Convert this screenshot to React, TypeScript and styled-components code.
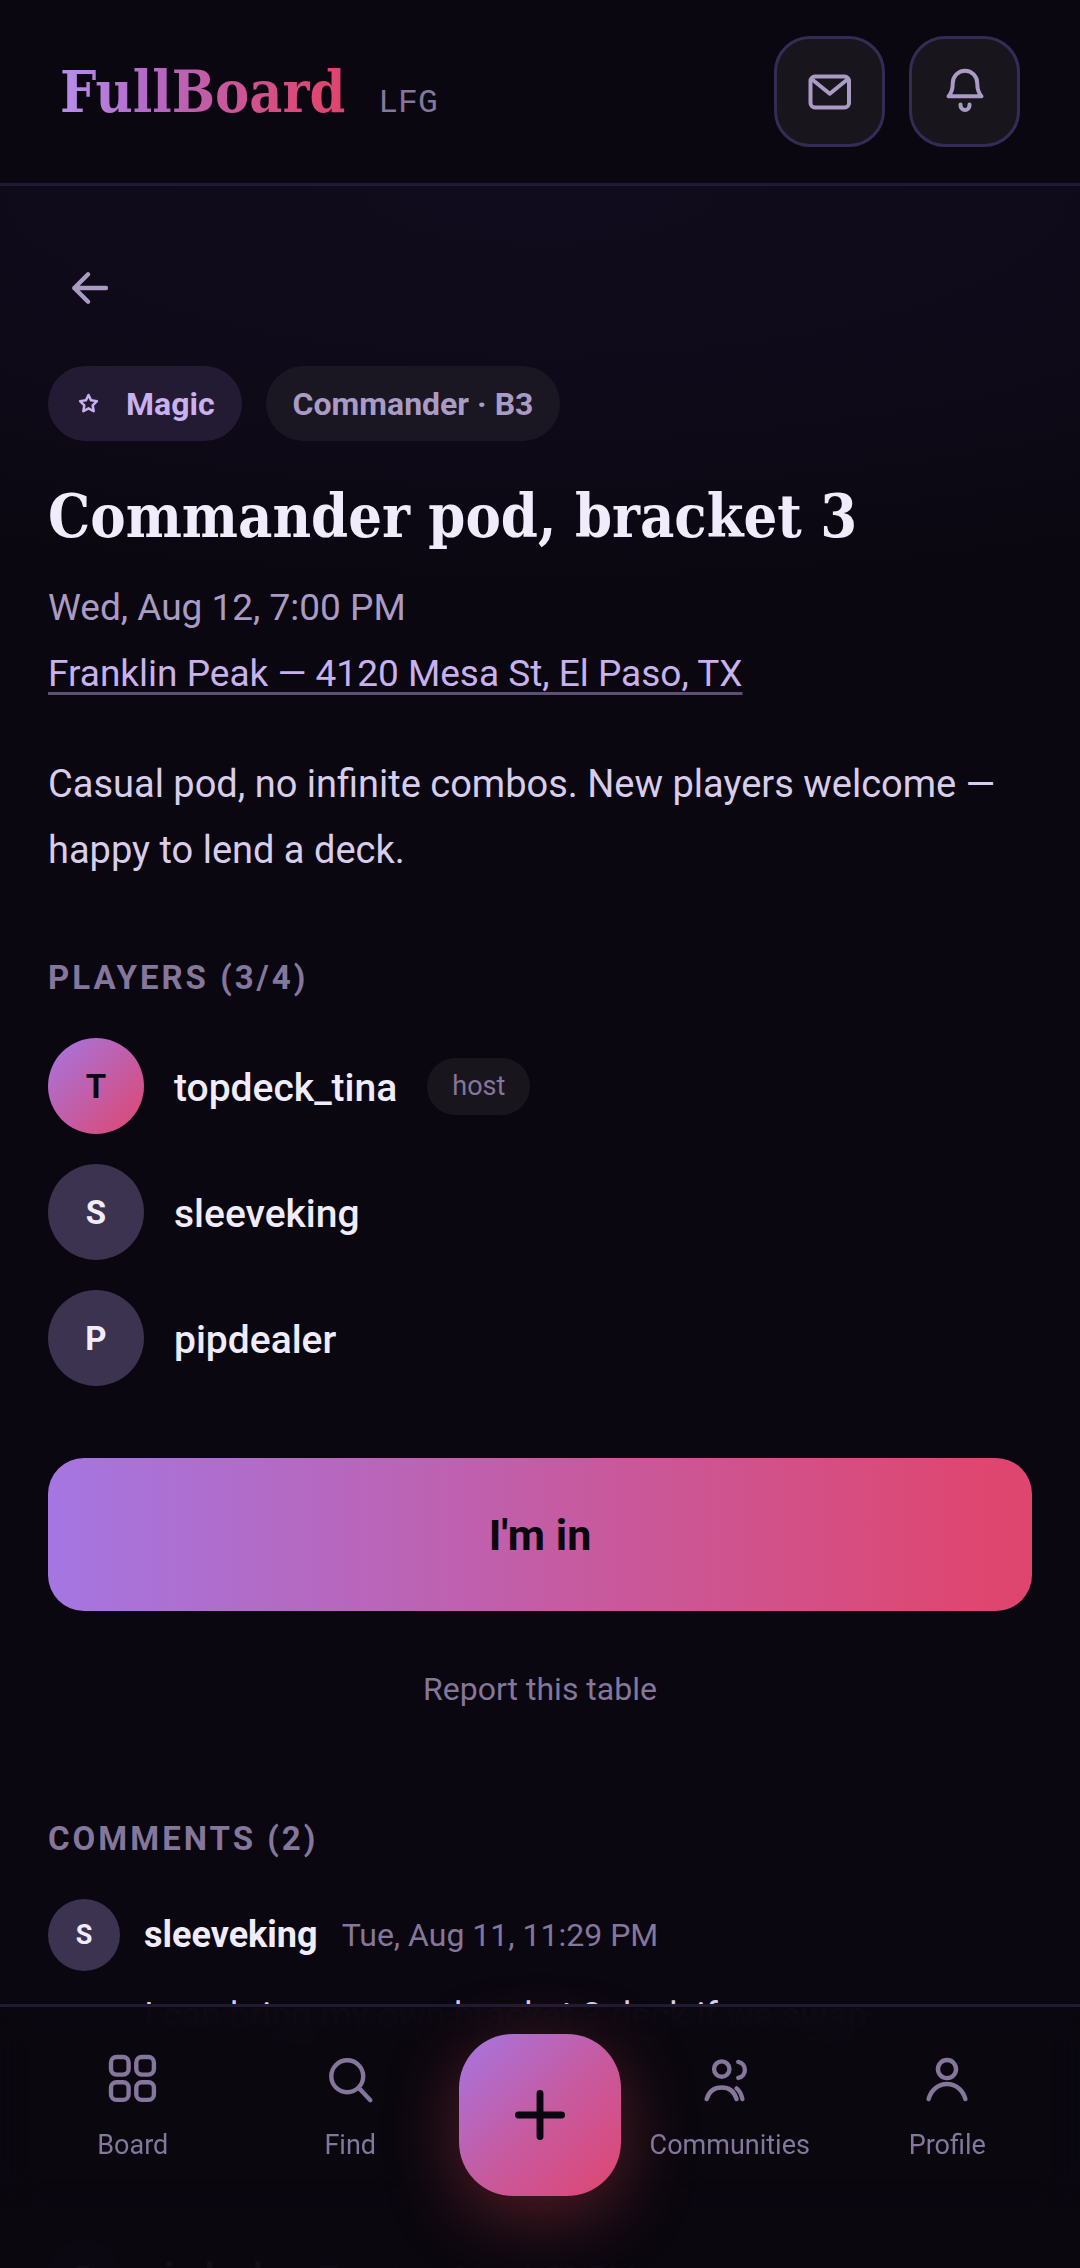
import React from 'react';
import styled, { createGlobalStyle, css } from 'styled-components';

const color = {
  bg: '#0a0710',
  line: '#211a30',
  panel: '#18151d',
  outline: '#352c55',
  text: '#f1ecfb',
  body: '#d8cdea',
  mid: '#a99bc4',
  muted: '#85769b',
  lilac: '#c9b1ee',
  violet: '#a576e2',
  rose: '#df466f',
};

const GlobalStyle = createGlobalStyle`
  *, *::before, *::after { box-sizing: border-box; }
  body {
    margin: 0;
    background: ${color.bg};
    color: ${color.text};
    font-family: Roboto, "Liberation Sans", sans-serif;
  }
  h1, h2, p, ul { margin: 0; padding: 0; }
  ul { list-style: none; }
  button { font-family: inherit; border: 0; padding: 0; cursor: pointer; }
`;

const Shell = styled.div`
  display: flex;
  flex-direction: column;
  height: 100vh;
  overflow: hidden;
`;

const Header = styled.header`
  display: flex;
  align-items: center;
  justify-content: space-between;
  padding: 36px 60px;
  border-bottom: 3px solid ${color.line};
`;

const Brand = styled.div`
  display: flex;
  align-items: baseline;
  gap: 33px;
`;

const Logo = styled.a`
  font-family: "DejaVu Serif Condensed", "DejaVu Serif", serif;
  font-size: 57px;
  font-weight: 700;
  line-height: 72px;
  text-decoration: none;
  color: transparent;
  background: linear-gradient(90deg, #b78fec, #b368c4 32%, #cc5596 62%, ${color.rose} 92%);
  background-clip: text;
  -webkit-background-clip: text;
`;

const LogoTag = styled.span`
  font-family: "Liberation Mono", monospace;
  font-size: 33px;
  color: ${color.muted};
`;

const HeaderActions = styled.div`
  display: flex;
  gap: 24px;
`;

const IconButton = styled.button`
  display: grid;
  place-items: center;
  width: 111px;
  height: 111px;
  border: 3px solid ${color.outline};
  border-radius: 36px;
  background: ${color.panel};
  color: ${color.mid};
`;

const Main = styled.main`
  flex: 1;
  min-height: 0;
  overflow-y: auto;
  scrollbar-width: none;
  padding: 60px 48px 0;
  background: radial-gradient(ellipse 1300px 420px at 50% 0, #110c1d, #0e0a18 55%, ${color.bg});
  background-repeat: no-repeat;
`;

const BackButton = styled.button`
  display: grid;
  place-items: center;
  width: 84px;
  height: 84px;
  background: none;
  color: ${color.mid};
`;

const Chips = styled.div`
  display: flex;
  gap: 24px;
  margin-top: 36px;
`;

const Chip = styled.span<{ $accent?: boolean }>`
  display: flex;
  align-items: center;
  gap: 24px;
  height: 75px;
  padding: 0 27px;
  border-radius: 38px;
  font-size: 32px;
  font-weight: 700;
  background: ${(p) => (p.$accent ? '#231b33' : '#1a1622')};
  color: ${(p) => (p.$accent ? color.lilac : color.mid)};
`;

const Title = styled.h1`
  margin-top: 40px;
  font-family: "DejaVu Serif Condensed", "DejaVu Serif", serif;
  font-size: 59px;
  font-weight: 700;
  line-height: 72px;
`;

const Meta = styled.div`
  display: flex;
  flex-direction: column;
  align-items: flex-start;
  margin-top: 22px;
  font-size: 37px;
  line-height: 66px;
  color: ${color.mid};
`;

const PlaceLink = styled.a`
  color: ${color.lilac};
  text-decoration: underline 3px #5f4e75;
  text-underline-offset: 6px;
  text-decoration-skip-ink: none;
`;

const Description = styled.p`
  margin-top: 44px;
  font-size: 38px;
  line-height: 66px;
  color: ${color.body};
`;

const SectionTitle = styled.h2<{ $gap: number }>`
  margin-top: ${(p) => p.$gap}px;
  margin-bottom: 36px;
  font-size: 33px;
  font-weight: 700;
  line-height: 48px;
  letter-spacing: 3px;
  text-transform: uppercase;
  color: ${color.muted};
`;

const Players = styled.ul`
  display: flex;
  flex-direction: column;
  gap: 30px;
`;

const Player = styled.li`
  display: flex;
  align-items: center;
  gap: 30px;
`;

const Avatar = styled.span<{ $small?: boolean; $host?: boolean }>`
  display: grid;
  place-items: center;
  flex: none;
  border-radius: 50%;
  font-weight: 700;
  background: #3b3350;
  color: ${color.text};
  ${(p) =>
    p.$small
      ? css`width: 72px; height: 72px; font-size: 27px;`
      : css`width: 96px; height: 96px; font-size: 33px;`}
  ${(p) =>
    p.$host &&
    css`
      background: linear-gradient(135deg, ${color.violet}, ${color.rose});
      color: ${color.bg};
    `}
`;

const PlayerName = styled.span`
  padding-top: 3px;
  font-size: 39px;
  font-weight: 500;
`;

const HostTag = styled.span`
  padding: 0 25px;
  border-radius: 29px;
  font-size: 27px;
  line-height: 57px;
  background: ${color.panel};
  color: ${color.muted};
`;

const JoinButton = styled.button`
  display: block;
  width: 100%;
  height: 153px;
  margin-top: 72px;
  border-radius: 36px;
  font-size: 43px;
  font-weight: 700;
  background: linear-gradient(90deg, ${color.violet}, #c75a9f 55%, ${color.rose} 96%);
  color: ${color.bg};
`;

const ReportButton = styled.button`
  display: block;
  margin: 54px auto 0;
  font-size: 32px;
  line-height: 48px;
  background: none;
  color: ${color.muted};
`;

const Comments = styled.ul`
  display: flex;
  flex-direction: column;
  gap: 198px;
`;

const CommentHead = styled.div`
  display: flex;
  align-items: center;
  gap: 24px;
`;

const CommentAuthor = styled.span`
  font-size: 36px;
  font-weight: 700;
`;

const CommentTime = styled.time`
  font-size: 32px;
  color: ${color.muted};
`;

const CommentText = styled.p`
  margin-top: 18px;
  padding-left: 96px;
  font-size: 36px;
  line-height: 54px;
  color: ${color.body};
`;

const TabBar = styled.nav`
  position: fixed;
  left: 0;
  right: 0;
  bottom: 0;
  display: flex;
  align-items: flex-start;
  height: 264px;
  padding: 27px 24px 0;
  border-top: 3px solid ${color.line};
  background: rgba(10, 7, 16, 0.97);

  &::before {
    content: '';
    position: absolute;
    inset: 0 0 60px;
    z-index: -1;
    backdrop-filter: blur(18px);
  }
`;

const Tab = styled.a`
  flex: 1 1 0;
  min-width: 0;
  display: flex;
  flex-direction: column;
  align-items: center;
  gap: 15px;
  padding-top: 12px;
  font-size: 27px;
  line-height: 36px;
  text-decoration: none;
  color: ${color.muted};
`;

const CreateButton = styled.button`
  display: grid;
  place-items: center;
  flex: none;
  width: 162px;
  height: 162px;
  border-radius: 54px;
  background: linear-gradient(135deg, ${color.violet}, #c75a9f 52%, ${color.rose});
  color: ${color.bg};
  box-shadow: 0 18px 72px rgba(224, 68, 80, 0.36);
`;

type IconProps = { size: number; stroke?: number; children: React.ReactNode };

const Icon = ({ size, stroke = 1.6, children }: IconProps) => (
  <svg
    width={size}
    height={size}
    viewBox="0 0 24 24"
    fill="none"
    stroke="currentColor"
    strokeWidth={stroke}
    strokeLinecap="round"
    strokeLinejoin="round"
    aria-hidden="true"
  >
    {children}
  </svg>
);

const tabIcons = {
  board: (
    <>
      <rect x="4" y="4" width="6.4" height="6.4" rx="2" />
      <rect x="13.2" y="4" width="6.4" height="6.4" rx="2" />
      <rect x="4" y="13.2" width="6.4" height="6.4" rx="2" />
      <rect x="13.2" y="13.2" width="6.4" height="6.4" rx="2" />
    </>
  ),
  find: (
    <>
      <circle cx="11" cy="11" r="5.8" />
      <path d="M15.3 15.4l4.1 4.3" />
    </>
  ),
  communities: (
    <>
      <circle cx="9" cy="8.4" r="2.8" />
      <path d="M15 5.8c3.2.6 3.2 5.2 0 5.8" />
      <path d="M3.5 19.3c.8-2.6 2.8-4.2 5.5-4.2s4.6 1.6 5.4 4.2" />
      <path d="M14.4 15.4c1.1.9 1.8 2.3 2.1 3.9" />
    </>
  ),
  profile: (
    <>
      <circle cx="12" cy="8.4" r="3.3" />
      <path d="M5.3 19.3c.9-3.2 3.4-5.5 6.7-5.5s5.8 2.3 6.7 5.5" />
    </>
  ),
};

const players = [
  { name: 'topdeck_tina', host: true },
  { name: 'sleeveking', host: false },
  { name: 'pipdealer', host: false },
];

const comments = [
  {
    author: 'sleeveking',
    time: 'Tue, Aug 11, 11:29 PM',
    text: 'I can bring my own bracket 3 deck if we swap',
  },
  { author: 'pipdealer', time: 'Tue, Aug 11, 11:39 PM', text: '' },
];

export default function App() {
  return (
    <>
      <GlobalStyle />
      <Shell>
        <Header>
          <Brand>
            <Logo href="#home">FullBoard</Logo>
            <LogoTag>LFG</LogoTag>
          </Brand>
          <HeaderActions>
            <IconButton aria-label="Messages">
              <Icon size={60}>
                <rect x="4.2" y="5.8" width="15.4" height="12.4" rx="1.8" />
                <path d="M5 7.1l6.9 5.6 6.9-5.6" />
              </Icon>
            </IconButton>
            <IconButton aria-label="Notifications">
              <Icon size={60}>
                <path d="M5.4 13.7C6.8 12.2 7.1 10.3 7.1 8.5a4.9 5 0 0 1 9.8 0c0 1.8.3 3.7 1.7 5.2z" />
                <path d="M10.2 17v.4a1.8 1.8 0 0 0 3.6 0V17" />
              </Icon>
            </IconButton>
          </HeaderActions>
        </Header>

        <Main>
          <BackButton aria-label="Back">
            <Icon size={66}>
              <path d="M17.8 12H6.3M11.3 7l-5 5 5 5" />
            </Icon>
          </BackButton>

          <Chips>
            <Chip $accent>
              <Icon size={27} stroke={2.2}>
                <path d="M12 4.4l2.3 4.8 5.2.7-3.8 3.7.9 5.3L12 16.3l-4.6 2.6.9-5.3-3.8-3.7 5.2-.7z" />
              </Icon>
              Magic
            </Chip>
            <Chip>Commander · B3</Chip>
          </Chips>

          <Title>Commander pod, bracket 3</Title>
          <Meta>
            <span>Wed, Aug 12, 7:00 PM</span>
            <PlaceLink href="#place">Franklin Peak — 4120 Mesa St, El Paso, TX</PlaceLink>
          </Meta>
          <Description>
            Casual pod, no infinite combos. New players welcome — happy to lend a deck.
          </Description>

          <SectionTitle $gap={71}>Players (3/4)</SectionTitle>
          <Players>
            {players.map((p) => (
              <Player key={p.name}>
                <Avatar $host={p.host}>{p.name[0].toUpperCase()}</Avatar>
                <PlayerName>{p.name}</PlayerName>
                {p.host && <HostTag>host</HostTag>}
              </Player>
            ))}
          </Players>

          <JoinButton>I'm in</JoinButton>
          <ReportButton>Report this table</ReportButton>

          <SectionTitle $gap={102}>Comments (2)</SectionTitle>
          <Comments>
            {comments.map((c) => (
              <li key={c.author}>
                <CommentHead>
                  <Avatar $small>{c.author[0].toUpperCase()}</Avatar>
                  <CommentAuthor>{c.author}</CommentAuthor>
                  <CommentTime>{c.time}</CommentTime>
                </CommentHead>
                {c.text && <CommentText>{c.text}</CommentText>}
              </li>
            ))}
          </Comments>
        </Main>

        <TabBar>
          <Tab href="#board">
            <Icon size={66}>{tabIcons.board}</Icon>
            Board
          </Tab>
          <Tab href="#find">
            <Icon size={66}>{tabIcons.find}</Icon>
            Find
          </Tab>
          <CreateButton aria-label="New table">
            <Icon size={72} stroke={2.3}>
              <path d="M12 4.8v14.4M4.8 12h14.4" />
            </Icon>
          </CreateButton>
          <Tab href="#communities">
            <Icon size={66}>{tabIcons.communities}</Icon>
            Communities
          </Tab>
          <Tab href="#profile">
            <Icon size={66}>{tabIcons.profile}</Icon>
            Profile
          </Tab>
        </TabBar>
      </Shell>
    </>
  );
}
